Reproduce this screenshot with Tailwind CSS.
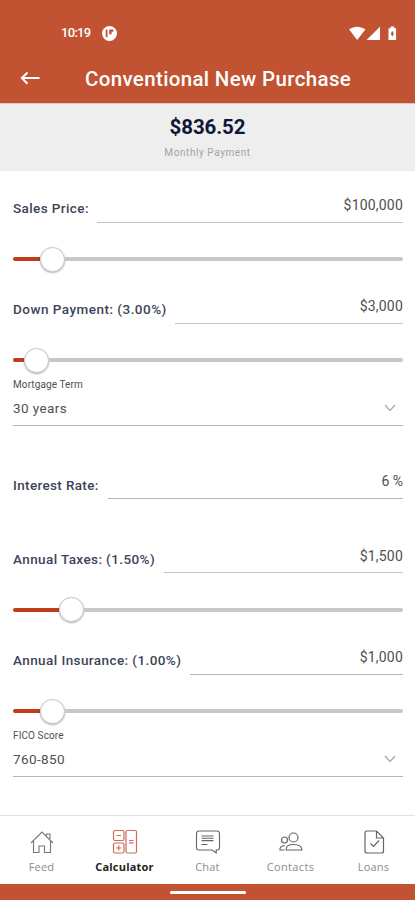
<!DOCTYPE html>
<html lang="en">
<head>
<meta charset="utf-8">
<title>Conventional New Purchase</title>
<script src="https://cdn.jsdelivr.net/npm/@tailwindcss/browser@4"></script>
</head>
<body class="bg-white">
<div class="flex h-[900px] w-[415px] flex-col overflow-hidden bg-white font-[Roboto,sans-serif] text-[#505050]">
  <header class="h-[103px] shrink-0 bg-[#c15232] text-white">
    <div class="flex h-[54px] items-end justify-between pr-[18px] pl-[61px]">
      <div class="flex h-[42px] items-center gap-[12px]">
        <span class="w-[29px] whitespace-nowrap text-[13px] font-medium tracking-[-0.7px]">10:19</span>
        <svg class="size-[15px]" viewBox="0 0 15 15"><circle cx="7.5" cy="7.5" r="7.5" fill="#fff"/><path d="M4.6 3.6v7.6" stroke="#c15232" stroke-width="1.8"/><path d="M7.2 3.6h4.2v2.2H9.600v2.400H7.200z" fill="#c15232"/></svg>
      </div>
      <div class="flex h-[42px] items-center">
        <svg class="h-[15px] w-[48px]" viewBox="0 0 48 15" fill="#fff"><path d="M0 3.200Q8 -1.800 16.500 3.200L8.200 14zM31 .8V14H17.500zM39.500 2.200h2V.6h3.800v1.600h1.800V14h-7.600z"/><path d="M43.300 4.800l1.500 2.900-1.500 3-1.500-3z" fill="#c15232"/></svg>
      </div>
    </div>
    <div class="flex h-[49px] items-center">
      <svg class="ml-[20px] h-[14px] w-[20px]" viewBox="0 0 20 14" fill="none" stroke="#fff" stroke-width="2"><path d="M19.500 6H2M7.500 .5L1.800 6l5.700 5.800"/></svg>
      <h1 class="ml-[45px] whitespace-nowrap text-[20.5px] leading-[24px] font-medium tracking-[0.35px]">Conventional New Purchase</h1>
    </div>
  </header>
  <section class="flex h-[68px] shrink-0 flex-col items-center border-t border-[#dcc9c4] bg-[#eeeeee]">
    <div class="mt-[11px] text-[20.5px] leading-[24px] font-bold tracking-[-0.1px] text-[#10163a]">$836.52</div>
    <div class="mt-[7px] text-[10px] leading-[14px] tracking-[0.58px] text-[#a3a3a3]">Monthly Payment</div>
  </section>
  <main class="flex flex-1 flex-col pr-[12px] pl-[13px] pt-[23px] text-[14px]">
    <div class="flex h-[29px] shrink-0">
      <div class="w-[84px] whitespace-nowrap pt-[4px] text-[13.5px] leading-[20px] font-medium tracking-[0.4px] text-[#3d4458]">Sales Price:</div>
      <div class="flex-1 border-b border-[#c4c4c4] text-right leading-[22px] tracking-[0.2px]">$100,000</div>
    </div>
    <div class="flex h-[72px] shrink-0 items-center">
      <div class="h-[4px] w-[27px] rounded-l-full bg-[#bf3d18]"></div>
      <div class="size-[25px] rounded-full border border-[#c8c8c8] bg-white shadow-[0_1px_2px_rgba(0,0,0,0.3)]"></div>
      <div class="h-[4px] flex-1 rounded-r-full bg-[#c8c8c8]"></div>
    </div>
    <div class="flex h-[29px] shrink-0">
      <div class="w-[162px] whitespace-nowrap pt-[4px] text-[13.5px] leading-[20px] font-medium tracking-[0.48px] text-[#3d4458]">Down Payment: (3.00%)</div>
      <div class="flex-1 border-b border-[#c4c4c4] text-right leading-[22px] tracking-[0.2px]">$3,000</div>
    </div>
    <div class="flex h-[54px] shrink-0 items-center pt-[18px]">
      <div class="h-[4px] w-[11px] rounded-l-full bg-[#bf3d18]"></div>
      <div class="size-[25px] rounded-full border border-[#c8c8c8] bg-white shadow-[0_1px_2px_rgba(0,0,0,0.3)]"></div>
      <div class="h-[4px] flex-1 rounded-r-full bg-[#c8c8c8]"></div>
    </div>
    <div class="h-[48px] shrink-0 border-b border-[#b5b5b5]">
      <div class="text-[10px] leading-[14px] tracking-[0.1px]">Mortgage Term</div>
      <div class="flex items-center justify-between pt-[6px] pr-[7px] text-[13.5px] leading-[20px] tracking-[0.4px]">30 years
        <svg class="h-[8px] w-[12px]" viewBox="0 0 12 8" fill="none" stroke="#aaa" stroke-width="1.300"><path d="M1 1l5 5.500L11 1"/></svg>
      </div>
    </div>
    <div class="mt-[44px] flex h-[29px] shrink-0">
      <div class="w-[95px] whitespace-nowrap pt-[5px] text-[13.5px] leading-[20px] font-medium tracking-[0.35px] text-[#3d4458]">Interest Rate:</div>
      <div class="flex-1 border-b border-[#b5b5b5] text-right leading-[23px]">6 %</div>
    </div>
    <div class="mt-[45px] flex h-[29px] shrink-0">
      <div class="w-[151px] whitespace-nowrap pt-[5px] text-[13.5px] leading-[20px] font-medium tracking-[0.4px] text-[#3d4458]">Annual Taxes: (1.50%)</div>
      <div class="flex-1 border-b border-[#c4c4c4] text-right leading-[24px] tracking-[0.2px]">$1,500</div>
    </div>
    <div class="flex h-[73px] shrink-0 items-center">
      <div class="h-[4px] w-[46px] rounded-l-full bg-[#bf3d18]"></div>
      <div class="size-[25px] rounded-full border border-[#c8c8c8] bg-white shadow-[0_1px_2px_rgba(0,0,0,0.3)]"></div>
      <div class="h-[4px] flex-1 rounded-r-full bg-[#c8c8c8]"></div>
    </div>
    <div class="flex h-[29px] shrink-0">
      <div class="w-[177px] whitespace-nowrap pt-[4px] text-[13.5px] leading-[20px] font-medium tracking-[0.42px] text-[#3d4458]">Annual Insurance: (1.00%)</div>
      <div class="flex-1 border-b border-[#b5b5b5] text-right leading-[23px] tracking-[0.2px]">$1,000</div>
    </div>
    <div class="flex h-[54px] shrink-0 items-center pt-[18px]">
      <div class="h-[4px] w-[27px] rounded-l-full bg-[#bf3d18]"></div>
      <div class="size-[25px] rounded-full border border-[#c8c8c8] bg-white shadow-[0_1px_2px_rgba(0,0,0,0.3)]"></div>
      <div class="h-[4px] flex-1 rounded-r-full bg-[#c8c8c8]"></div>
    </div>
    <div class="h-[48px] shrink-0 border-b border-[#b5b5b5]">
      <div class="text-[10px] leading-[14px] tracking-[0.1px]">FICO Score</div>
      <div class="flex items-center justify-between pt-[6px] pr-[7px] text-[13.5px] leading-[20px] tracking-[0.4px]">760-850
        <svg class="h-[8px] w-[12px]" viewBox="0 0 12 8" fill="none" stroke="#aaa" stroke-width="1.300"><path d="M1 1l5 5.500L11 1"/></svg>
      </div>
    </div>
  </main>
  <nav class="grid h-[69px] shrink-0 grid-cols-5 border-t border-[#e2e2e2] bg-white pt-[13px] font-['Open_Sans',sans-serif] text-[11px] leading-[16px] text-[#8b8b8b]">
    <div class="flex flex-col items-center gap-[4px]">
      <svg class="size-[26px]" viewBox="0 0 26 26" fill="none" stroke="#777" stroke-width="1.1"><path d="M2 14L13 3l11 11M4.500 12v11.500H10V17h5.500v6.500h6V12M17.500 6.500V5H21v5"/></svg>
      <span class="tracking-[0.2px]">Feed</span>
    </div>
    <div class="flex flex-col items-center gap-[4px]">
      <svg class="size-[26px]" viewBox="0 0 26 26" fill="none" stroke="#cf6b5b" stroke-width="1.200"><rect x="1.500" y="1.500" width="10.500" height="10" rx="1.500"/><rect x="1.500" y="14" width="10.500" height="10" rx="1.500"/><rect x="14" y="1.500" width="10.500" height="22.500" rx="1.500"/><path d="M4.500 6.500H9M4.300 19h5M6.800 16.500v5M17 11.500h4.500M17 13.800h4.500"/></svg>
      <span class="font-bold tracking-[0.2px] text-[#222]">Calculator</span>
    </div>
    <div class="flex flex-col items-center gap-[4px]">
      <svg class="size-[26px]" viewBox="0 0 26 26" fill="none" stroke="#666" stroke-width="1.100"><path d="M4 2h18q2.500 0 2.500 2.500v14q0 2.500-2.500 2.500h-.8v3L17 21H4q-2.500 0-2.500-2.500v-14Q1.500 2 4 2z"/><path d="M6.500 7h12M6.500 9.300h12M6.500 11.600h12M6.500 15.500h6"/></svg>
      <span class="tracking-[0.2px]">Chat</span>
    </div>
    <div class="flex flex-col items-center gap-[4px]">
      <svg class="size-[26px]" viewBox="0 0 26 26" fill="none" stroke="#666" stroke-width="1.200"><circle cx="15.500" cy="8.500" r="4.500"/><circle cx="6.500" cy="11" r="3"/><path d="M8.300 21q-1-5.500 7.200-5.500t8.500 5.500zM6.500 21H2q-.5-4 4.800-4.300"/></svg>
      <span class="tracking-[0.350px]">Contacts</span>
    </div>
    <div class="flex flex-col items-center gap-[4px]">
      <svg class="size-[26px]" viewBox="0 0 26 26" fill="none" stroke="#666" stroke-width="1.200"><path d="M15.500 2H6Q4 2 4 4v18q0 2 2 2h14.500q2 0 2-2V9zM15.500 2v7h7M9.500 14.500l3 3 5.500-6"/></svg>
      <span class="tracking-[0.2px]">Loans</span>
    </div>
  </nav>
  <footer class="flex h-[16px] shrink-0 items-start justify-center bg-[#c15232] pt-[7px]">
    <div class="h-[3px] w-[76px] rounded-full bg-white"></div>
  </footer>
</div>
</body>
</html>
